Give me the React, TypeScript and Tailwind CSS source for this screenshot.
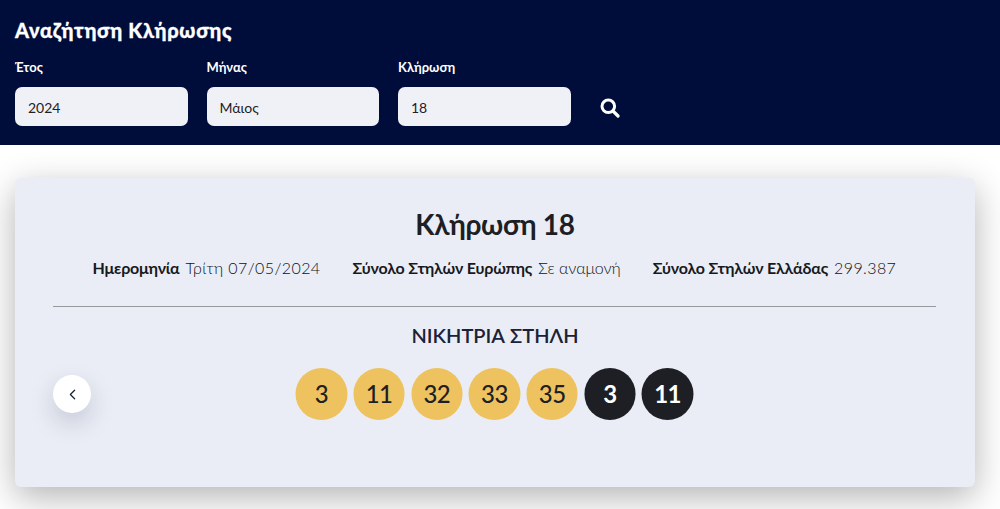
import { ChevronLeft } from 'lucide-react'

const font = { fontFamily: '"Lato", "Noto Sans", sans-serif' }

function SearchIcon() {
  return (
    <svg width="20" height="20" viewBox="0 0 20 20" fill="none">
      <circle cx="8.3" cy="8.3" r="6.3" stroke="#fff" strokeWidth="3" />
      <path d="M13 13l5 5" stroke="#fff" strokeWidth="3.2" strokeLinecap="round" />
    </svg>
  )
}

function Field({ label, value }: { label: string; value: string }) {
  return (
    <div className="w-[172.5px] shrink-0">
      <div className="text-[13px] leading-[16px] font-bold text-white h-[28px]">{label}</div>
      <div className="h-[39px] rounded-[7px] bg-[#eff1f6] pl-[13px] pt-[2px] flex items-center text-[14px] text-[#1e2129]">{value}</div>
    </div>
  )
}

function Ball({ n, dark }: { n: number; dark?: boolean }) {
  return (
    <div
      className={
        dark
          ? 'w-[51.5px] h-[51.5px] rounded-full bg-[#1d1f25] text-white font-bold flex items-center justify-center text-[24px] tracking-[-0.5px]'
          : 'w-[51.5px] h-[51.5px] rounded-full bg-[#edc25f] text-[#1d1f25] font-medium flex items-center justify-center text-[24px] tracking-[-0.5px]'
      }
    >
      {n}
    </div>
  )
}

function Stat({ label, value, wide }: { label: string; value: string; wide?: boolean }) {
  return (
    <div className="flex gap-[6px]">
      <span className="font-bold text-[#17191e] tracking-[-0.2px]">{label}</span>
      <span className={wide ? 'font-light text-[#0e1014] tracking-[0.4px]' : 'font-light text-[#0e1014]'}>{value}</span>
    </div>
  )
}

export default function App() {
  return (
    <div className="h-[509px] overflow-hidden bg-white" style={font}>
      {/* search header */}
      <div className="relative z-10 h-[145px] bg-[#000d3a] pl-[15px] pt-[18px]">
        <h1 className="text-[20px] leading-[24px] font-black text-white tracking-[0.7px] [-webkit-text-stroke:0.3px_white] mb-[17px]">Αναζήτηση Κλήρωσης</h1>
        <div className="flex gap-[19px] items-end">
          <Field label="Έτος" value="2024" />
          <Field label="Μήνας" value="Μάιος" />
          <Field label="Κλήρωση" value="18" />
          <button className="ml-[10.5px] mb-[8px]">
            <SearchIcon />
          </button>
        </div>
      </div>

      {/* draw card */}
      <div className="mt-[33px] mx-[15px] w-[960px] h-[309px] rounded-[6px] bg-[#eaedf5] shadow-[0_10px_35px_rgba(0,0,0,0.3)] relative px-[38px] pt-[27px]">
        <h2 className="text-center text-[28px] leading-[38px] font-bold text-[#1d1f25] tracking-[-0.3px]">Κλήρωση 18</h2>
        <div className="mt-[14px] mr-[1.2px] flex justify-center gap-[32px] text-[16px] leading-[22px]">
          <Stat label="Ημερομηνία" value="Τρίτη 07/05/2024" wide />
          <Stat label="Σύνολο Στηλών Ευρώπης" value="Σε αναμονή" />
          <Stat label="Σύνολο Στηλών Ελλάδας" value="299.387" wide />
        </div>
        <div className="mt-[27px] mr-[1px] border-t border-[#97999c]" />
        <div className="mt-[14px] text-center text-[20px] leading-[28px] font-semibold text-[#1b2238]">ΝΙΚΗΤΡΙΑ ΣΤΗΛΗ</div>
        <div className="mt-[19px] flex justify-center gap-[6.2px] -translate-x-[0.5px]">
          {[3, 11, 32, 33, 35].map((n, i) => (
            <Ball key={i} n={n} />
          ))}
          <Ball n={3} dark />
          <Ball n={11} dark />
        </div>
        <button className="absolute left-[38px] top-[197px] w-[38px] h-[38px] rounded-full bg-white shadow-[0_10px_25px_rgba(30,40,80,0.18)] flex items-center justify-center text-[#1b2238]">
          <ChevronLeft size={17} strokeWidth={1.75} />
        </button>
      </div>
    </div>
  )
}
